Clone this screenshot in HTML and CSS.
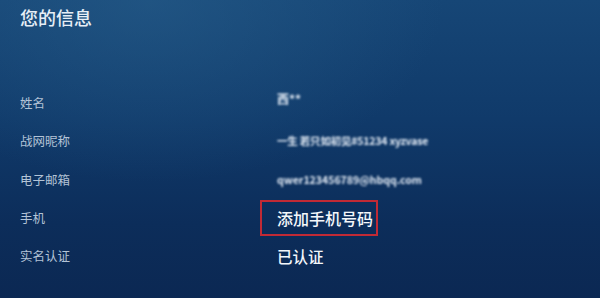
FILE: index.html
```html
<!DOCTYPE html>
<html lang="zh-CN">
<head>
<meta charset="utf-8">
<title>您的信息</title>
<link rel="stylesheet" href="styles.css">
</head>
<body>
<main class="screen">
  <h1 class="title">您的信息</h1>
  <dl class="info">
    <dt class="label">姓名</dt>
    <dd class="value blur name">西**</dd>
    <dt class="label">战网昵称</dt>
    <dd class="value blur nick">一生 若只如初见#51234 xyzvase</dd>
    <dt class="label">电子邮箱</dt>
    <dd class="value blur mail">qwer123456789@hbqq.com</dd>
    <dt class="label">手机</dt>
    <dd class="value"><span class="add-phone">添加手机号码</span></dd>
    <dt class="label">实名认证</dt>
    <dd class="value strong">已认证</dd>
  </dl>
</main>
</body>
</html>
```
FILE: styles.css
```css
html, body {
  margin: 0;
  padding: 0;
  background: #ffffff;
}
body {
  font-family: "Noto Sans CJK SC", "Noto Sans", sans-serif;
  width: 600px;
  height: 300px;
  overflow: hidden;
}
.screen {
  height: 298px;
  box-sizing: border-box;
  padding: 5px 0 0 20px;
  background:
    radial-gradient(ellipse 420px 260px at 25% 0%, rgba(40, 95, 140, 0.55), rgba(40, 95, 140, 0) 70%),
    linear-gradient(180deg, #164676 0%, #103a6a 40%, #0c2d5a 75%, #0b2853 100%);
  color: #ffffff;
}
.title {
  margin: 0;
  font-size: 18px;
  line-height: 24px;
  font-weight: 500;
  color: #e6eef6;
}
.info {
  margin: 55px 0 0 0;
  display: grid;
  grid-template-columns: 257px 1fr;
  grid-auto-rows: 38.3px;
  align-items: center;
}
.label {
  margin: 0;
  font-size: 12.5px;
  line-height: 16px;
  color: #b3c3d6;
}
.value {
  margin: 0;
  font-size: 15.5px;
  line-height: 20px;
  color: #f2f6fa;
  font-weight: 500;
  white-space: nowrap;
}
.blur {
  filter: blur(1.1px);
  font-size: 10.5px;
  color: #e4ecf6;
  font-weight: 700;
}
.name {
  font-size: 12px;
  margin-top: -8px;
}
.nick {
  letter-spacing: -0.2px;
}
.add-phone {
  display: inline-block;
  margin-left: -17px;
  padding: 6px 3px 6px 15px;
  border: 2px solid #c12a35;
  font-size: 16px;
  line-height: 20px;
  color: #f4f7fa;
  font-weight: 500;
  white-space: nowrap;
}
```
